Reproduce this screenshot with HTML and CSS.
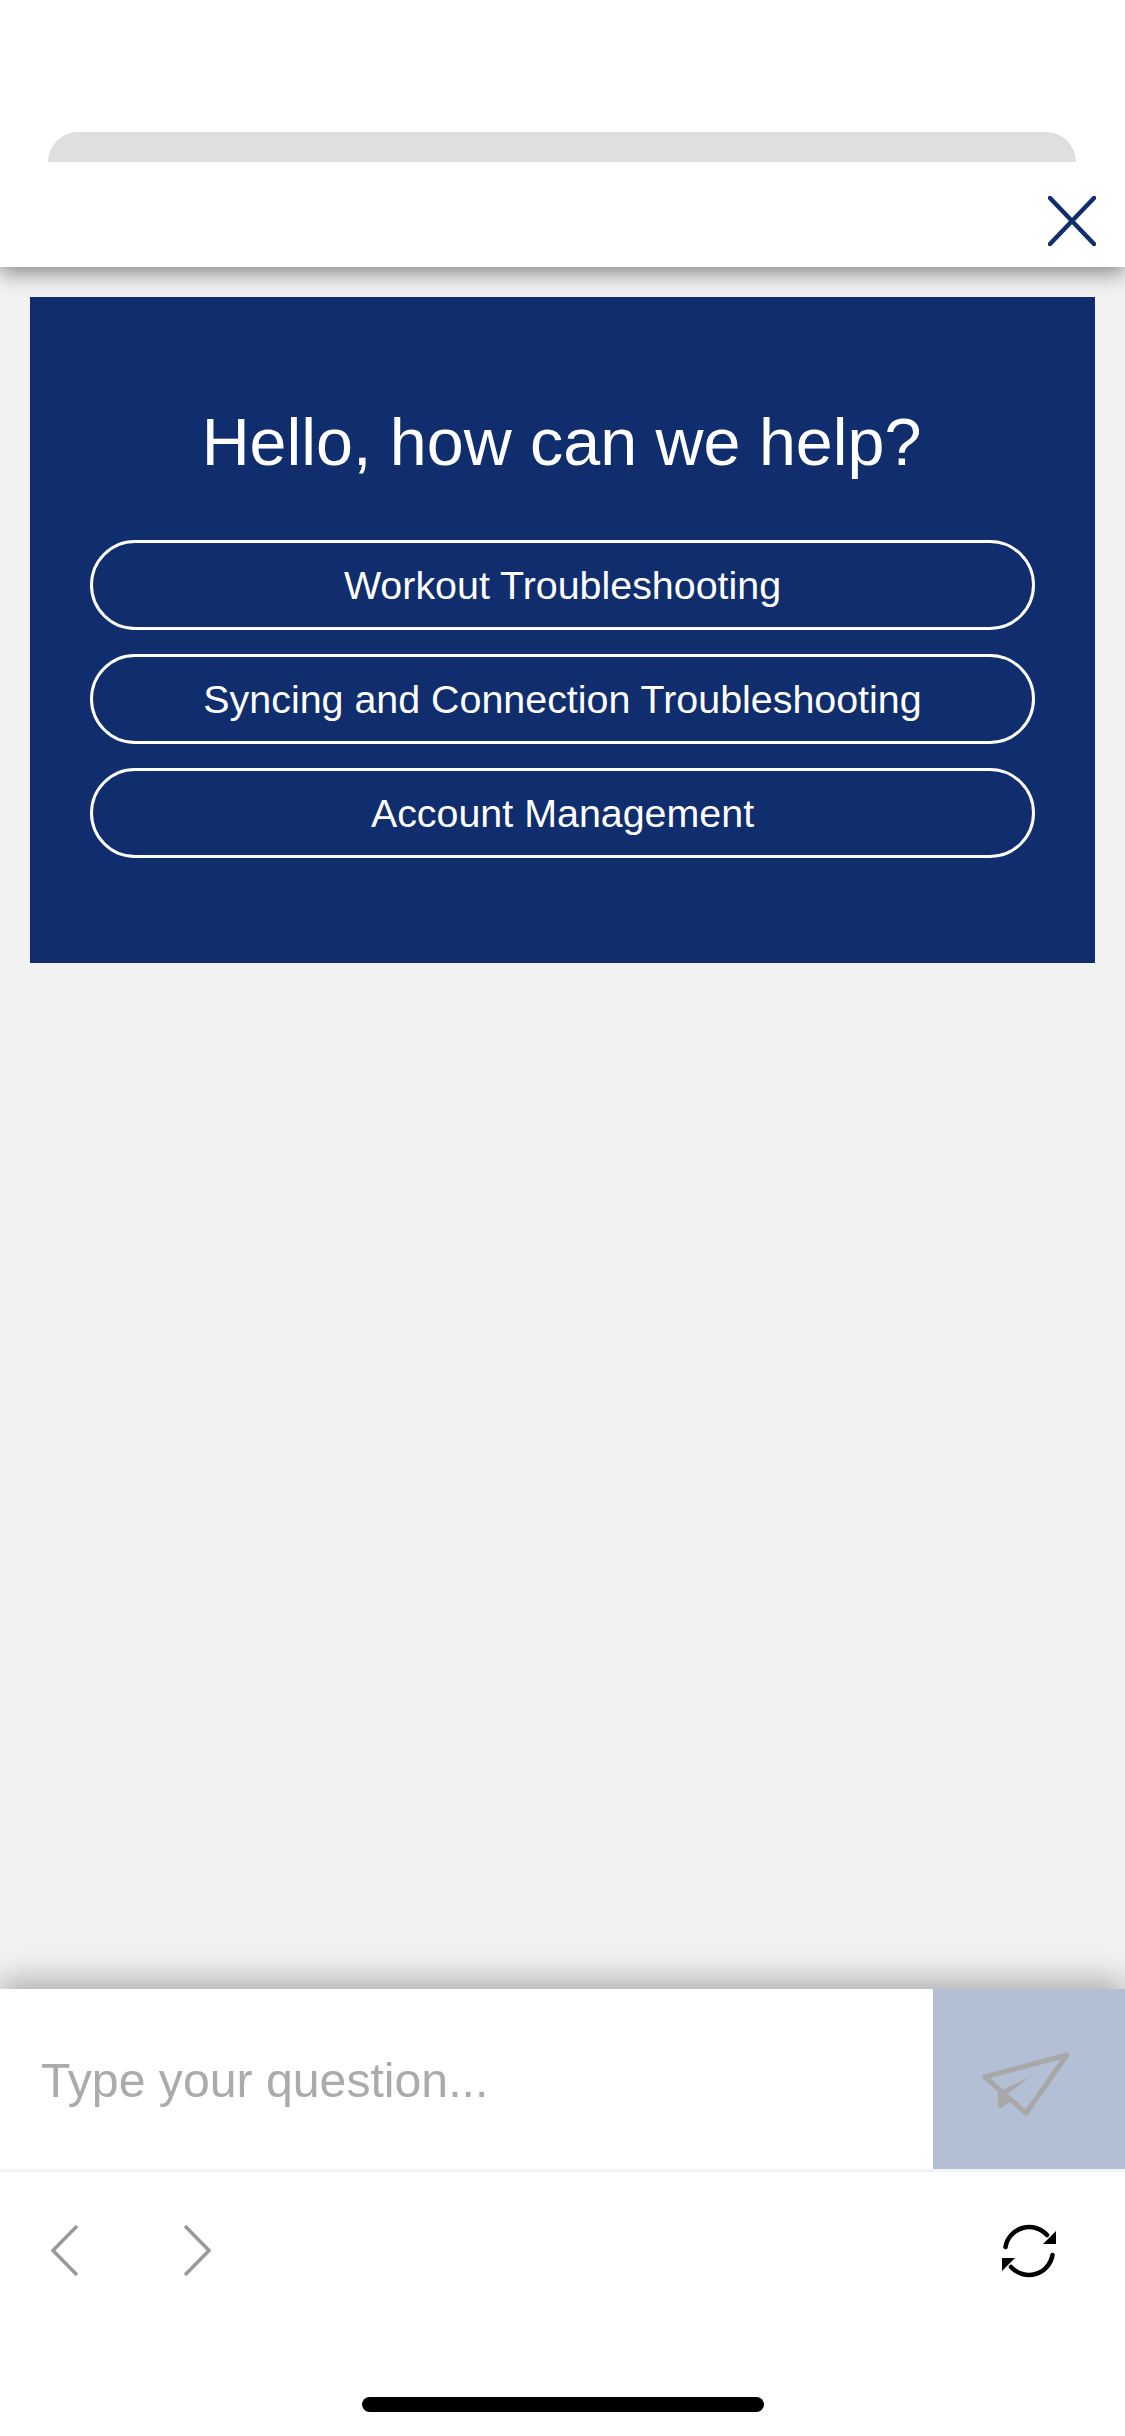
FILE: index.html
```html
<!DOCTYPE html>
<html lang="en">
<head>
    <meta charset="UTF-8">
    <meta name="viewport" content="width=device-width, initial-scale=1.0">
    <title>Help</title>
    <link rel="stylesheet" href="styles.css">
</head>
<body>
    <div class="top">
        <div class="tab"></div>
    </div>

    <header>
        <button class="close-btn" aria-label="Close">
            <svg width="48" height="50" viewBox="0 0 48 50">
                <path d="M2 2 L46 48 M46 2 L2 48" fill="none" stroke="#102d6e" stroke-width="4.500" stroke-linecap="round"/>
            </svg>
        </button>
    </header>

    <div class="content">
        <div class="help-card">
            <h1>Hello, how can we help?</h1>
            <button class="topic-btn">Workout Troubleshooting</button>
            <button class="topic-btn">Syncing and Connection Troubleshooting</button>
            <button class="topic-btn">Account Management</button>
        </div>
    </div>

    <form class="composer">
        <input type="text" placeholder="Type your question...">
        <button type="button" class="send-btn" aria-label="Send">
            <svg width="96" height="76" viewBox="0 0 96 76">
                <path d="M86 14 L4 36 L45 72 Z" fill="none" stroke="#a8a8a8" stroke-width="5" stroke-linejoin="round"/>
                <path d="M49 36 L21 49 L17 51 L17 66 L20 67 L29 61 L25 54 Z" fill="#a8a8a8"/>
            </svg>
        </button>
    </form>

    <div class="toolbar">
        <div class="nav-arrows">
            <svg width="28" height="52" viewBox="0 0 28 52">
                <path d="M26 1 L2 25.500 L26 50" fill="none" stroke="#999" stroke-width="3.500"/>
            </svg>
            <svg width="28" height="52" viewBox="0 0 28 52">
                <path d="M2 1 L26 25.500 L2 50" fill="none" stroke="#999" stroke-width="3.500"/>
            </svg>
        </div>
        <svg class="refresh" width="56" height="56" viewBox="0 0 56 56">
            <path d="M4.500 24 A24 24 0 0 1 46 12" fill="none" stroke="#000" stroke-width="4.500" stroke-linecap="round"/>
            <path d="M51.500 32 A24 24 0 0 1 10 44" fill="none" stroke="#000" stroke-width="4.500" stroke-linecap="round"/>
            <path d="M55 8 L55 21 L42 21 Z" fill="#000"/>
            <path d="M1 48 L1 35 L14 35 Z" fill="#000"/>
        </svg>
    </div>

    <div class="home-area">
        <div class="home-bar"></div>
    </div>
</body>
</html>
```

FILE: styles.css
```css
* {
    box-sizing: border-box;
}

body {
    font-family: 'Liberation Sans', Arial, sans-serif;
    margin: 0;
    height: 2436px;
    display: flex;
    flex-direction: column;
    background-color: #f2f2f2;
    overflow: hidden;
}

button {
    font-family: inherit;
    cursor: pointer;
}

.top {
    background-color: white;
    padding: 132px 49px 0 48px;
    position: relative;
    z-index: 2;
}

.tab {
    height: 30px;
    background-color: #dfdfdf;
    border-radius: 30px 30px 0 0;
}

header {
    height: 105px;
    background-color: white;
    box-shadow: 0 6px 20px rgba(0, 0, 0, 0.45);
    display: flex;
    justify-content: flex-end;
    padding: 34px 29px 0 0;
    position: relative;
}

.close-btn {
    background: none;
    border: none;
    padding: 0;
    height: 50px;
    display: flex;
}

.content {
    flex: 1;
    padding: 30px;
}

.help-card {
    background-color: #102d6e;
    padding: 0 60px 105px;
    display: flex;
    flex-direction: column;
    gap: 24px;
}

.help-card h1 {
    color: white;
    font-size: 66.400px;
    font-weight: normal;
    text-align: center;
    margin: 0 0 0 -2px;
    height: 219px;
    padding-top: 108px;
    line-height: 74px;
}

.topic-btn {
    height: 90px;
    background: none;
    border: 3px solid white;
    border-radius: 45px;
    color: white;
    font-size: 39.400px;
    padding: 0;
}

.composer {
    height: 183px;
    display: flex;
    background-color: white;
    border-bottom: 3px solid #f4f4f4;
    box-shadow: 0 -8px 30px rgba(0, 0, 0, 0.3);
    position: relative;
}

.composer input {
    flex: 1;
    min-width: 0;
    border: none;
    outline: none;
    padding: 2px 0 0 41px;
    font-family: inherit;
    font-size: 48.200px;
    color: #333;
}

.composer input::placeholder {
    color: #ababab;
    opacity: 1;
}

.send-btn {
    width: 192px;
    background-color: #b3bfd4;
    border: none;
    padding: 0;
    display: flex;
    align-items: center;
    justify-content: center;
}

.toolbar {
    height: 160px;
    background-color: white;
    display: flex;
    align-items: center;
    justify-content: space-between;
    padding: 0 68px 3px 51px;
    position: relative;
}

.nav-arrows {
    display: flex;
    gap: 104px;
}

.home-area {
    height: 104px;
    background-color: white;
    display: flex;
    justify-content: center;
    padding-top: 65px;
    position: relative;
}

.home-bar {
    width: 402px;
    height: 15px;
    background-color: black;
    border-radius: 8px;
}
```
